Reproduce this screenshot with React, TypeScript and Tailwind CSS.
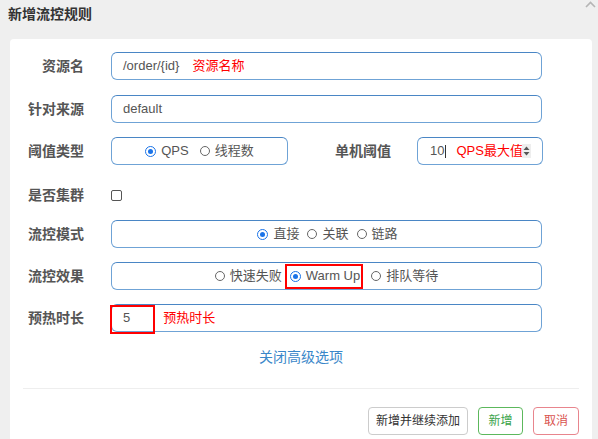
import React from "react";

const font = { fontFamily: '"Liberation Sans", "Noto Sans CJK SC", sans-serif' };

function Radio({ checked }: { checked?: boolean }) {
  return checked ? (
    <span className="inline-block w-[11px] h-[11px] rounded-full border border-[#1a73e8] bg-white relative mr-[5px] shrink-0">
      <span className="absolute left-[2px] top-[2px] w-[5px] h-[5px] rounded-full bg-[#1a73e8]" />
    </span>
  ) : (
    <span className="inline-block w-[10px] h-[10px] rounded-full border border-[#666] bg-white mr-[5px] shrink-0" />
  );
}

function Label({ children }: { children: React.ReactNode }) {
  return (
    <div className="w-[74px] shrink-0 text-right text-[14px] font-bold text-[#555] leading-none whitespace-nowrap">
      {children}
    </div>
  );
}

const box =
  "h-[28px] shrink-0 rounded-[6px] border border-[#6fa3d6] border-t-[#4a86c5] bg-white flex items-center text-[13px] text-[#555] whitespace-nowrap";

export default function App() {
  return (
    <div className="w-[598px] h-[439px] bg-[#efefef] overflow-hidden relative" style={font}>
      <svg className="absolute left-[585px] top-[1px]" width="11" height="7" viewBox="0 0 11 7">
        <path d="M1 6 L5.5 1.5 L10 6" stroke="#b5b5b5" strokeWidth="1.6" fill="none" />
      </svg>
      <div className="pl-[8px] pt-[4px] h-[39px] text-[14px] font-bold text-[#333]">新增流控规则</div>
      <div className="ml-[10px] w-[582px] h-[420px] bg-white rounded-[4px] pt-[13px]">
        {/* 资源名 */}
        <div className="flex items-center h-[28px]">
          <Label>资源名</Label>
          <div className={`${box} ml-[27px] w-[431px] pl-[11px]`}>
            <span>/order/{"{id}"}</span>
            <span className="ml-[13px] text-[#ff0000] text-[13px]">资源名称</span>
          </div>
        </div>
        {/* 针对来源 */}
        <div className="flex items-center h-[28px] mt-[15px]">
          <Label>针对来源</Label>
          <div className={`${box} ml-[27px] w-[431px] pl-[11px]`}>default</div>
        </div>
        {/* 阈值类型 */}
        <div className="flex items-center h-[28px] mt-[14px]">
          <Label>阈值类型</Label>
          <div className={`${box} ml-[27px] w-[177px] justify-center`}>
            <Radio checked />
            <span>QPS</span>
            <span className="ml-[11px]" />
            <Radio />
            <span>线程数</span>
          </div>
          <div className="ml-[47px] w-[56px] shrink-0 whitespace-nowrap text-[14px] font-bold text-[#555] leading-none">
            单机阈值
          </div>
          <div className={`${box} ml-[26px] w-[126px] pl-[12px]`}>
            <span>10</span>
            <span className="w-px h-[13px] bg-[#333] ml-[1px]" />
            <span className="ml-[10px] text-[#ff0000] text-[13px]">QPS最大值</span>
            <span className="flex flex-col items-center justify-center bg-[#eeeeee] w-[9px] h-[14px] ml-[-1px]">
              <svg width="7" height="10" viewBox="0 0 7 10">
                <path d="M0.5 4 L3.5 0.5 L6.5 4 Z" fill="#555" />
                <path d="M0.5 6 L3.5 9.5 L6.5 6 Z" fill="#555" />
              </svg>
            </span>
          </div>
        </div>
        {/* 是否集群 */}
        <div className="flex items-center mt-[16px] h-[28px]">
          <Label>是否集群</Label>
          <span className="ml-[27px] w-[11px] h-[11px] rounded-[2px] border border-[#555] bg-white" />
        </div>
        {/* 流控模式 */}
        <div className="flex items-center h-[28px] mt-[11px]">
          <Label>流控模式</Label>
          <div className={`${box} ml-[27px] w-[431px] justify-center pl-[2px]`}>
            <Radio checked />
            <span>直接</span>
            <span className="ml-[8px]" />
            <Radio />
            <span>关联</span>
            <span className="ml-[8px]" />
            <Radio />
            <span>链路</span>
          </div>
        </div>
        {/* 流控效果 */}
        <div className="flex items-center h-[28px] mt-[14px]">
          <Label>流控效果</Label>
          <div className={`${box} ml-[27px] w-[431px] justify-center`}>
            <Radio />
            <span>快速失败</span>
            <span className="ml-[3px] h-[25px] border-2 border-[#ff0000] flex items-center pl-[3px] pr-[1px]">
              <Radio checked />
              <span>Warm Up</span>
            </span>
            <span className="ml-[8px]" />
            <Radio />
            <span>排队等待</span>
          </div>
        </div>
        {/* 预热时长 */}
        <div className="flex items-center h-[28px] mt-[14px]">
          <Label>预热时长</Label>
          <div className={`${box} ml-[27px] w-[431px] relative`}>
            <span className="absolute left-[-2px] top-[0px] w-[45px] h-[29px] border-2 border-[#ff0000]" />
            <span className="ml-[11px]">5</span>
            <span className="ml-[33px] text-[#ff0000] text-[13px]">预热时长</span>
          </div>
        </div>
        <div className="mt-[15px] text-center text-[14px] text-[#3a87c9]">关闭高级选项</div>
        <div className="mt-[20px] mx-[13px] h-px bg-[#eeeeee]" />
        <div className="flex justify-end mt-[18px] pr-[13px] gap-[10px] text-[12px]">
          <div className="w-[100px] h-[28px] border border-[#cccccc] rounded-[4px] flex items-center justify-center text-[#333]">
            新增并继续添加
          </div>
          <div className="w-[45px] h-[28px] border border-[#5cb85c] rounded-[4px] flex items-center justify-center text-[#3aa34a]">
            新增
          </div>
          <div className="w-[46px] h-[28px] border border-[#e8858d] rounded-[4px] flex items-center justify-center text-[#d9534f]">
            取消
          </div>
        </div>
      </div>
    </div>
  );
}
